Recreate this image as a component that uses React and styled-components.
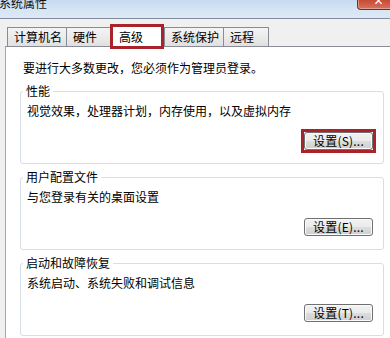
import React from "react";
import styled, { createGlobalStyle } from "styled-components";

const GlobalStyle = createGlobalStyle`
  html, body {
    margin: 0;
    padding: 0;
    background: #f0f0f0;
    overflow: hidden;
  }
  * { box-sizing: border-box; }
`;

const FONT = `"Noto Sans CJK SC", "Noto Sans", sans-serif`;

const Window = styled.div`
  width: 390px;
  height: 338px;
  overflow: hidden;
  display: flex;
  flex-direction: column;
  background: #f0f0f0;
  font-family: ${FONT};
  font-size: 12px;
  color: #000;
`;

const TitleBar = styled.div`
  height: 19px;
  flex: none;
  display: flex;
  justify-content: space-between;
  align-items: flex-start;
  overflow: hidden;
  background: linear-gradient(180deg, #c6daf0 0%, #d6e4f4 50%, #dce8f5 100%);
  border-bottom: 1px solid #7f8d9c;
`;

const TitleText = styled.span`
  margin-top: -4px;
  margin-left: -1px;
  line-height: 14px;
  font-size: 12px;
  color: #111;
`;

const CloseButton = styled.div`
  width: 43px;
  height: 18px;
  margin-top: -8px;
  margin-right: -10px;
  border: 1px solid #7a2a20;
  border-top: none;
  border-radius: 0 0 4px 4px;
  background: linear-gradient(180deg, #d86a55 0%, #c94c36 50%, #d27560 100%);
  color: #fff;
  font-family: "DejaVu Sans", sans-serif;
  font-weight: bold;
  font-size: 12px;
  line-height: 18px;
  text-align: center;
  box-shadow: inset 0 0 0 1px rgba(255, 200, 190, 0.5);
`;

const Content = styled.div`
  flex: 1;
  display: flex;
  flex-direction: column;
  padding-left: 5px;
`;

const TabStrip = styled.div`
  height: 27px;
  flex: none;
  display: flex;
  align-items: flex-end;
  padding-left: 2px;
`;

const Tab = styled.div`
  position: relative;
  min-width: ${(p) => (p.$active ? 54 : 46)}px;
  height: ${(p) => (p.$active ? 25 : 19)}px;
  padding: ${(p) => (p.$active ? "0 6px 0 6px" : "0 4px 0 6px")};
  margin-left: ${(p) => (p.$active ? -2 : p.$first ? 0 : -1)}px;
  margin-right: ${(p) => (p.$active ? 1 : 0)}px;
  margin-bottom: ${(p) => (p.$active ? -3 : 0)}px;
  z-index: ${(p) => (p.$active ? 2 : 1)};
  border: ${(p) => (p.$active ? "3px solid #a8232a" : "1px solid #898c95")};
  border-bottom: ${(p) => (p.$active ? "3px solid #a8232a" : "none")};
  background: ${(p) =>
    p.$active ? "#fff" : "linear-gradient(180deg, #f4f4f4 0%, #ebebeb 50%, #e0e0e0 100%)"};
  line-height: ${(p) => (p.$active ? 19 : 18)}px;
  white-space: nowrap;
`;

const Panel = styled.div`
  flex: 1;
  background: #fff;
  border-top: 1px solid #898c95;
  border-left: 1px solid #a3a8b0;
  padding: 13px 0 0 14px;
  display: flex;
  flex-direction: column;
  align-items: flex-start;
`;

const Intro = styled.div`
  line-height: 16px;
  margin-left: 3px;
  margin-bottom: 4px;
`;

const Group = styled.div`
  width: 364px;
  margin-top: ${(p) => (p.$first ? 11 : 13)}px;
  border: 1px solid #d5dfe5;
  border-radius: 3px;
  padding: 0 10px 13px 2px;
  display: flex;
  flex-direction: column;
  align-items: flex-start;
`;

const Legend = styled.div`
  margin-top: -8px;
  padding: 0 3px;
  line-height: 14px;
  background: #fff;
`;

const Description = styled.div`
  margin-top: 5px;
  margin-left: 4px;
  line-height: 16px;
`;

const ButtonRow = styled.div`
  align-self: stretch;
  margin-top: 13px;
  display: flex;
  justify-content: flex-end;
`;

const Highlight = styled.div`
  margin: -3px;
  border: 3px solid #a8232a;
  display: flex;
`;

const Button = styled.div`
  width: 69px;
  height: 18px;
  border: 1px solid #707070;
  border-radius: 3px;
  background: linear-gradient(180deg, #f2f2f2 0%, #ebebeb 50%, #dddddd 50%, #cfcfcf 100%);
  box-shadow: inset 0 0 0 1px #fbfbfb;
  line-height: 16px;
  text-align: center;
  white-space: nowrap;
  letter-spacing: 0.2px;
`;

const tabs = ["计算机名", "硬件", "高级", "系统保护", "远程"];

const groups = [
  { title: "性能", desc: "视觉效果，处理器计划，内存使用，以及虚拟内存", key: "S", hl: true },
  { title: "用户配置文件", desc: "与您登录有关的桌面设置", key: "E" },
  { title: "启动和故障恢复", desc: "系统启动、系统失败和调试信息", key: "T" },
];

export default function App() {
  return (
    <>
      <GlobalStyle />
      <Window>
        <TitleBar>
          <TitleText>系统属性</TitleText>
          <CloseButton>✕</CloseButton>
        </TitleBar>
        <Content>
          <TabStrip>
            {tabs.map((t, i) => (
              <Tab key={t} $first={i === 0} $active={t === "高级"}>
                {t}
              </Tab>
            ))}
          </TabStrip>
          <Panel>
            <Intro>要进行大多数更改，您必须作为管理员登录。</Intro>
            {groups.map((g, i) => {
              const btn = <Button>设置({g.key})...</Button>;
              return (
                <Group key={g.title} $first={i === 0}>
                  <Legend>{g.title}</Legend>
                  <Description>{g.desc}</Description>
                  <ButtonRow>{g.hl ? <Highlight>{btn}</Highlight> : btn}</ButtonRow>
                </Group>
              );
            })}
          </Panel>
        </Content>
      </Window>
    </>
  );
}
